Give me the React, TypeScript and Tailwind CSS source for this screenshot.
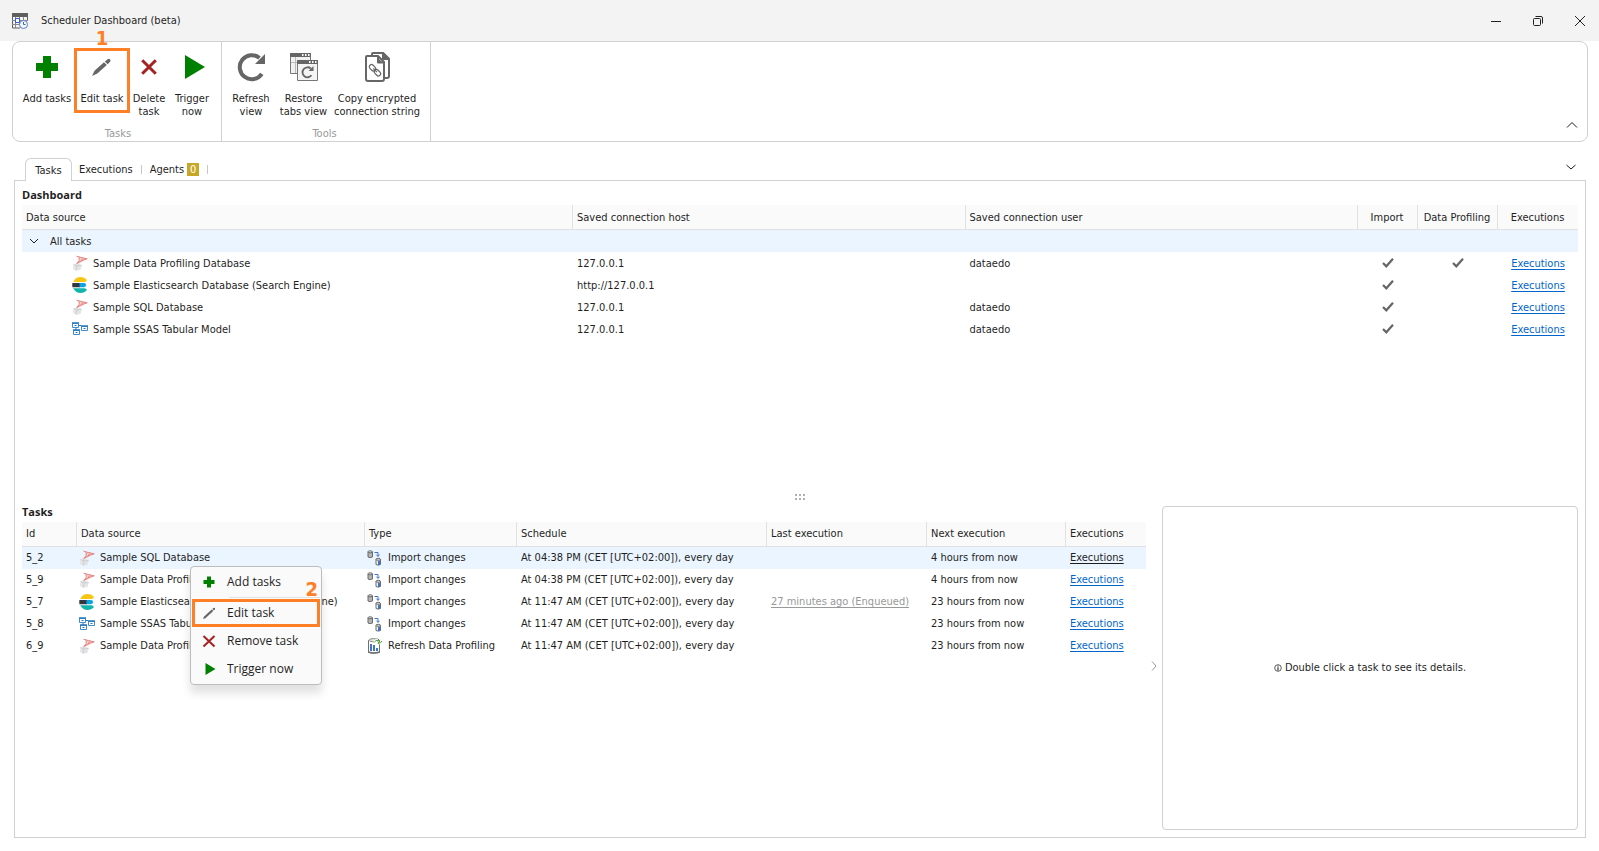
import type { ReactNode } from "react";

type SourceKind = "sqlserver" | "elastic" | "ssas";

type DashboardRow = {
  name: string;
  kind: SourceKind;
  host: string;
  user: string;
  profiling: boolean;
};

type TaskRow = {
  id: string;
  name: string;
  kind: SourceKind;
  type: "import" | "profiling";
  schedule: string;
  last: string;
  next: string;
};

const dashboardRows: DashboardRow[] = [
  {
    name: "Sample Data Profiling Database",
    kind: "sqlserver",
    host: "127.0.0.1",
    user: "dataedo",
    profiling: true,
  },
  {
    name: "Sample Elasticsearch Database (Search Engine)",
    kind: "elastic",
    host: "http://127.0.0.1",
    user: "",
    profiling: false,
  },
  {
    name: "Sample SQL Database",
    kind: "sqlserver",
    host: "127.0.0.1",
    user: "dataedo",
    profiling: false,
  },
  {
    name: "Sample SSAS Tabular Model",
    kind: "ssas",
    host: "127.0.0.1",
    user: "dataedo",
    profiling: false,
  },
];

const afternoon = "At 04:38 PM (CET [UTC+02:00]), every day";
const morning = "At 11:47 AM (CET [UTC+02:00]), every day";

const taskRows: TaskRow[] = [
  {
    id: "5_2",
    name: "Sample SQL Database",
    kind: "sqlserver",
    type: "import",
    schedule: afternoon,
    last: "",
    next: "4 hours from now",
  },
  {
    id: "5_9",
    name: "Sample Data Profiling Database",
    kind: "sqlserver",
    type: "import",
    schedule: afternoon,
    last: "",
    next: "4 hours from now",
  },
  {
    id: "5_7",
    name: "Sample Elasticsearch Database (Search Engine)",
    kind: "elastic",
    type: "import",
    schedule: morning,
    last: "27 minutes ago (Enqueued)",
    next: "23 hours from now",
  },
  {
    id: "5_8",
    name: "Sample SSAS Tabular Model",
    kind: "ssas",
    type: "import",
    schedule: morning,
    last: "",
    next: "23 hours from now",
  },
  {
    id: "6_9",
    name: "Sample Data Profiling Database",
    kind: "sqlserver",
    type: "profiling",
    schedule: morning,
    last: "",
    next: "23 hours from now",
  },
];

const linkClass = "text-[#0066cc] underline underline-offset-2";
const headCellClass =
  "h-[25px] border-b border-[#e1e1e1] bg-[#fafafa] p-0 pl-1 text-left font-normal";
const dividerClass = "border-r";
const annotationClass =
  'absolute bottom-full font-["DejaVu_Sans_Condensed","DejaVu_Sans",sans-serif] text-[20px] leading-[20px] font-bold text-[#ff7f27]';

function AppIcon() {
  return (
    <svg className="size-4" viewBox="0 0 16 16" fill="none">
      <path d="M0.5 1v14H8M15.5 1v6" stroke="#5f5f5f" />
      <path d="M0 0h16v4H0z" fill="#5f5f5f" />
      <path
        d="M0 7.5h16M0 11.5h8M3.5 4v11M7.5 4v8M11.5 4v3"
        stroke="#8a8a8a"
      />
      <rect x="3.5" y="5.5" width="4" height="4" fill="#fff" stroke="#3b62b8" />
      <circle cx="11.5" cy="11.5" r="4" fill="#f5f8ff" stroke="#5b7cc4" />
      <path d="M11.5 9v2.5h2" stroke="#3b62b8" />
    </svg>
  );
}

function PlusIcon({ className }: { className: string }) {
  return (
    <svg className={className} viewBox="0 0 32 32" fill="#008000">
      <path d="M12 5h8v7h7v8h-7v7h-8v-7H5v-8h7z" />
    </svg>
  );
}

function PencilIcon({ className }: { className: string }) {
  return (
    <svg className={className} viewBox="0 0 32 32" fill="#666">
      <path d="M6 25l2.500-5.200L18 11.200l2.800 2.800L11.300 22.600z" />
      <path d="M18.800 10.500l2.800-2.300q1.400-.9 2.400.1t.1 2.400l-2.500 2.600z" />
    </svg>
  );
}

function SlimPencilIcon() {
  return (
    <svg className="size-4" viewBox="0 0 16 16" fill="#666">
      <path d="M2 14l.9-2.300L10.700 4.500l1.600 1.600L4.400 13.200z" />
      <path d="M11.300 3.900l1.100-1q.9-.5 1.400.1t.1 1.300l-1 1.200z" />
    </svg>
  );
}

function CrossIcon({ className }: { className: string }) {
  return (
    <svg
      className={className}
      viewBox="0 0 16 16"
      fill="none"
      stroke="#a52222"
      strokeWidth="3"
    >
      <path d="M1.200 1.200l13.600 13.600M14.800 1.200L1.200 14.800" />
    </svg>
  );
}

function SlimCrossIcon() {
  return (
    <svg
      className="size-4"
      viewBox="0 0 16 16"
      fill="none"
      stroke="#a52222"
      strokeWidth="2"
    >
      <path d="M2.500 3l11 10.500M13.500 3l-11 10.500" />
    </svg>
  );
}

function PlayIcon({ className }: { className: string }) {
  return (
    <svg className={className} viewBox="0 0 32 32" fill="#008000">
      <path d="M9 4l20 12L9 28z" />
    </svg>
  );
}

function RefreshIcon() {
  return (
    <svg className="size-8" viewBox="0 0 32 32" fill="none">
      <path
        d="M26.800 22.800A12 12 0 1 1 24.500 7"
        stroke="#666"
        strokeWidth="4"
      />
      <path d="M30 3v10H20z" fill="#666" />
    </svg>
  );
}

function RestoreTabsIcon() {
  return (
    <svg className="size-8" viewBox="0 0 32 32" fill="none">
      <path d="M2.500 2.500h20v20h-20z" fill="#f1f1f1" stroke="#777" />
      <path d="M2 2h21v4H2z" fill="#666" />
      <path d="M14 4h1.500M17 4h1.500M20 4h1.500" stroke="#fff" strokeWidth="2" />
      <path d="M7.500 6v16M3 11.500h6" stroke="#bbb" />
      <path d="M9.500 9.500h20v20h-20z" fill="#f4f4f4" stroke="#777" />
      <path d="M9 9h21v4H9z" fill="#666" />
      <path d="M21 11h1.500M24 11h1.500M27 11h1.500" stroke="#fff" strokeWidth="2" />
      <path
        d="M23.500 24.300A5 5 0 1 1 22.800 17.500"
        stroke="#666"
        strokeWidth="1.800"
      />
      <path d="M25.500 15v5h-5z" fill="#666" />
    </svg>
  );
}

function CopyStringIcon() {
  return (
    <svg
      className="size-8"
      viewBox="0 0 32 32"
      fill="none"
      stroke="#666"
      strokeWidth="2"
      strokeLinejoin="round"
    >
      <path d="M11 5V3q0-1 1-1h10l6 6v17q0 2-2 2h-2" />
      <path d="M22 2v6h6z" fill="#666" />
      <path d="M6 5h11l6 6v17q0 2-2 2H7q-2 0-2-2V6q0-1 1-1z" fill="#fff" />
      <path d="M17 5.500v6h6" />
      <path d="M17 7v5h5z" fill="#666" stroke="none" />
      <g strokeWidth="1.200">
        <rect
          x="8"
          y="14.500"
          width="7"
          height="4.500"
          rx="2.200"
          transform="rotate(45 11.500 16.700)"
        />
        <rect
          x="13"
          y="19.500"
          width="7"
          height="4.500"
          rx="2.200"
          transform="rotate(45 16.500 21.700)"
        />
        <path d="M12.200 17.300l3.800 3.800" />
      </g>
    </svg>
  );
}

function SourceIcon({ kind }: { kind: SourceKind }) {
  if (kind === "elastic") {
    return (
      <svg className="size-4 shrink-0" viewBox="0 0 16 16">
        <path d="M1.200 5Q3.500 0 8.500 0q4 0 6.500 3.200Q14 5 12.500 5z" fill="#f7c613" />
        <path d="M.4 6H8v4.200H.4Q0 8 .4 6z" fill="#343741" />
        <path d="M7.500 6H12a2.100 2.100 0 0 1 0 4.200H7.500z" fill="#0ba4e0" />
        <path d="M1.200 11.200h11.300q1.500 0 2.500 1.800-2.500 3-6.500 3-5 0-7.300-4.800z" fill="#12b5ab" />
      </svg>
    );
  }

  if (kind === "ssas") {
    return (
      <svg className="size-4 shrink-0" viewBox="0 0 16 16" fill="none">
        <path
          d="M0.500 2.500h6v4h-6zM9.500 5.500h6v4h-6zM1.500 9.500h6v4h-6z"
          fill="#fff"
          stroke="#3d8ccf"
        />
        <path d="M0 2h7M9 5h7M1 9h7" stroke="#2877bd" strokeWidth="1.500" />
        <path d="M4 7v2M7 4.500h2M2.500 4.500h2M11.500 7.500h2M3.500 11.500h2" stroke="#2877bd" />
      </svg>
    );
  }

  return (
    <svg className="size-4 shrink-0" viewBox="0 0 16 16" fill="none">
      <path d="M1.500 9.500l4-1.200 4.500 2-1.500 4.700-4 .8L1 14z" fill="#e4e5e7" />
      <path d="M1.500 9.500l3.500 1.500 4.500-.7M5 11l-1 4.500" stroke="#cccdd0" />
      <path d="M4.500 1q3 1.500 3 3.500 0 2-3.500 4.500l4-1 7.500-4.200Q10 2 4.500 1z" fill="#f6d0ce" />
      <path
        d="M4.500 1.200q4 1.300 10.700 2.600Q9 5 4.500 8.800M7 2.500q1.500 2.500-2 6M10.500 3.500l-1.500 3"
        stroke="#e07a76"
        strokeWidth=".9"
      />
    </svg>
  );
}

function ImportIcon() {
  return (
    <svg className="size-4 shrink-0" viewBox="0 0 16 16" fill="none">
      <path d="M1 2v5q2 1.200 4.500 0V2z" fill="#b5b5b5" stroke="#6a6a6a" />
      <ellipse cx="3.200" cy="1.800" rx="2.300" ry="1" fill="#ddd" stroke="#6a6a6a" />
      <path d="M7.500 2.500H11V6M9.500 4.700L11 6.500l1.500-1.800" stroke="#3f74c6" />
      <path d="M9 9.500v5q2 1.200 4.500 0v-5z" fill="#f5f5f5" stroke="#6a6a6a" />
      <ellipse cx="11.200" cy="9.300" rx="2.300" ry="1" fill="#ddd" stroke="#6a6a6a" />
      <path d="M12 11v4" stroke="#3f74c6" strokeWidth="2" />
    </svg>
  );
}

function ProfilingIcon() {
  return (
    <svg className="size-4 shrink-0" viewBox="0 0 16 16" fill="none">
      <path d="M1.500 2.500v12q4 1.300 11 0v-12z" fill="#fff" stroke="#707070" />
      <path d="M1.500 14q5 1.800 11 0" stroke="#707070" strokeWidth="1.500" />
      <ellipse cx="6.500" cy="2.200" rx="4.500" ry="1.600" fill="#e3e3e3" stroke="#8a8a8a" />
      <path d="M4 6v7M7 7v6M10 10v3" stroke="#3f74c6" strokeWidth="2" />
      <path d="M7.500 4q1-2 4-1.500M15 4q-1 2-4 1.500" stroke="#fff" strokeWidth="3" />
      <path
        d="M7.500 4q1-2 4.500-1.800M10.500.5l1.700 1.700-1.700 1.600M15 3q-.5 2.200-4 2.200M12.500 3.800L11 5.200l1.500 1.500"
        stroke="#3f9a2f"
      />
    </svg>
  );
}

function CheckIcon({ label }: { label: string }) {
  return (
    <svg
      className="mx-auto size-3"
      viewBox="0 0 12 12"
      role="img"
      aria-label={label}
    >
      <path d="M1 6l3.300 3.300L11 1.700" fill="none" stroke="#666" strokeWidth="2.200" />
    </svg>
  );
}

function Chevron({ d, className }: { d: string; className: string }) {
  return (
    <svg
      className={className}
      viewBox="0 0 12 12"
      fill="none"
      stroke="currentColor"
    >
      <path d={d} />
    </svg>
  );
}

function RibbonButton({
  icon,
  label,
  className,
  children,
}: {
  icon: ReactNode;
  label: string;
  className: string;
  children?: ReactNode;
}) {
  return (
    <button
      type="button"
      className={`relative flex flex-col items-center pt-[3px] ${className}`}
    >
      {icon}
      <span className="mt-[9px] leading-[13px] whitespace-pre">{label}</span>
      {children}
    </button>
  );
}

function RibbonGroup({
  title,
  className,
  children,
}: {
  title: string;
  className: string;
  children: ReactNode;
}) {
  return (
    <section
      className={`flex flex-col justify-between border-r border-[#d0d0d0] pt-[6px] ${className}`}
    >
      <div className="flex items-start">{children}</div>
      <h2 className="text-center leading-[15px] text-[#999]">{title}</h2>
    </section>
  );
}

function TitleBar() {
  return (
    <header className="flex h-[41px] shrink-0 items-center bg-[#f3f3f3] pr-[9px] pl-3">
      <AppIcon />
      <h1 className="ml-[13px] flex-1">Scheduler Dashboard (beta)</h1>
      <div className="flex gap-[22px]">
        <button type="button" aria-label="Minimize" className="flex size-5 items-center justify-center">
          <svg className="size-3" viewBox="0 0 12 12" stroke="#222">
            <path d="M1 6.500h10" />
          </svg>
        </button>
        <button type="button" aria-label="Restore" className="flex size-5 items-center justify-center">
          <svg className="size-3" viewBox="0 0 12 12" fill="none" stroke="#222">
            <rect x="1.500" y="3.500" width="7" height="7" rx="1" />
            <path d="M3.500 1.500H9q1.500 0 1.500 1.500v5.500" />
          </svg>
        </button>
        <button type="button" aria-label="Close" className="flex size-5 items-center justify-center">
          <svg className="size-3" viewBox="0 0 12 12" fill="none" stroke="#222">
            <path d="M1 1l10 10M11 1L1 11" />
          </svg>
        </button>
      </div>
    </header>
  );
}

function Ribbon() {
  return (
    <div className="mr-[11px] ml-3 flex h-[101px] shrink-0 rounded-lg border border-[#d0d0d0]">
      <RibbonGroup title="Tasks" className="pr-[5px] pl-[7px]">
        <RibbonButton
          icon={<PlusIcon className="size-8" />}
          label="Add tasks"
          className="w-[54px]"
        />
        <RibbonButton
          icon={<PencilIcon className="size-8" />}
          label="Edit task"
          className="h-[65px] w-[56px] ring-3 ring-[#ff7f27] ring-inset"
        >
          <span className={`${annotationClass} inset-x-0 text-center`}>1</span>
        </RibbonButton>
        <RibbonButton
          icon={<CrossIcon className="m-2 size-4" />}
          label={"Delete\ntask"}
          className="w-[38px]"
        />
        <RibbonButton
          icon={<PlayIcon className="size-8" />}
          label={"Trigger\nnow"}
          className="w-[48px]"
        />
      </RibbonGroup>
      <RibbonGroup title="Tools" className="pr-[7px] pl-1">
        <RibbonButton
          icon={<RefreshIcon />}
          label={"Refresh\nview"}
          className="w-[50px]"
        />
        <RibbonButton
          icon={<RestoreTabsIcon />}
          label={"Restore\ntabs view"}
          className="w-[55px]"
        />
        <RibbonButton
          icon={<CopyStringIcon />}
          label={"Copy encrypted\nconnection string"}
          className="w-[92px]"
        />
      </RibbonGroup>
      <button type="button" aria-label="Collapse ribbon" className="mt-auto mr-[9px] mb-[10px] ml-auto">
        <Chevron d="M1 8.500L6 3.500L11 8.500" className="size-3" />
      </button>
    </div>
  );
}

function TabStrip() {
  return (
    <nav className="mt-4 mr-3 ml-[14px] flex h-[22px] shrink-0 items-center pl-[11px]">
      <button
        type="button"
        className="relative z-10 -mb-px h-[23px] w-[47px] rounded-t-md border border-b-0 border-[#d0d0d0] bg-white"
      >
        Tasks
      </button>
      <button type="button" className="px-[7px]">
        Executions
      </button>
      <span className="ml-px h-[9px] w-px bg-[#c8c8c8]" />
      <button type="button" className="flex items-center gap-[3px] px-2">
        Agents
        <span className="h-[13px] w-3 bg-[#c9a726] text-center leading-[13px] text-white">
          0
        </span>
      </button>
      <span className="h-[9px] w-px bg-[#c8c8c8]" />
      <button type="button" aria-label="Tab list" className="mr-[10px] mb-1 ml-auto">
        <Chevron d="M1.500 4L6 8L10.500 4" className="size-3" />
      </button>
    </nav>
  );
}

function SectionTitle({ children }: { children: ReactNode }) {
  return (
    <h2 className='h-5 font-["Open_Sans",sans-serif] text-[11px] leading-5 font-bold'>
      {children}
    </h2>
  );
}

function DashboardTable() {
  return (
    <table className="w-full table-fixed border-separate border-spacing-0">
      <colgroup>
        <col className="w-[551px]" />
        <col />
        <col />
        <col className="w-[60px]" />
        <col className="w-[80px]" />
        <col className="w-[80px]" />
      </colgroup>
      <thead>
        <tr>
          <th className={`${headCellClass} ${dividerClass}`}>Data source</th>
          <th className={`${headCellClass} ${dividerClass}`}>
            Saved connection host
          </th>
          <th className={`${headCellClass} ${dividerClass}`}>
            Saved connection user
          </th>
          <th className={`${headCellClass} ${dividerClass}`}>
            <span className="block pr-[5px] text-center">Import</span>
          </th>
          <th className={`${headCellClass} ${dividerClass}`}>
            <span className="block pr-[5px] text-center whitespace-nowrap">
              Data Profiling
            </span>
          </th>
          <th className={headCellClass}>
            <span className="block pr-[5px] text-center">Executions</span>
          </th>
        </tr>
      </thead>
      <tbody>
        <tr className="h-[22px] bg-[#ebf5ff]">
          <td colSpan={6} className="p-0">
            <div className="flex items-center gap-[10px] pl-[6px]">
              <Chevron d="M2 4L6 8L10 4" className="size-3" />
              All tasks
            </div>
          </td>
        </tr>
        {dashboardRows.map((row) => (
          <tr key={row.name} className="h-[22px]">
            <td className="p-0">
              <div className="flex items-center gap-[5px] pl-[50px]">
                <SourceIcon kind={row.kind} />
                {row.name}
              </div>
            </td>
            <td className="p-0 pl-1">{row.host}</td>
            <td className="p-0 pl-1">{row.user}</td>
            <td className="p-0">
              <CheckIcon label="Import" />
            </td>
            <td className="p-0">
              {row.profiling && <CheckIcon label="Data Profiling" />}
            </td>
            <td className="p-0 text-center">
              <a href="#executions" className={linkClass}>
                Executions
              </a>
            </td>
          </tr>
        ))}
      </tbody>
    </table>
  );
}

function TasksTable() {
  return (
    <table className="w-full table-fixed border-separate border-spacing-0 whitespace-nowrap">
      <colgroup>
        <col className="w-[55px]" />
        <col />
        <col className="w-[152px]" />
        <col className="w-[250px]" />
        <col className="w-[160px]" />
        <col className="w-[139px]" />
        <col className="w-[80px]" />
      </colgroup>
      <thead>
        <tr>
          <th className={`${headCellClass} ${dividerClass}`}>Id</th>
          <th className={`${headCellClass} ${dividerClass}`}>Data source</th>
          <th className={`${headCellClass} ${dividerClass}`}>Type</th>
          <th className={`${headCellClass} ${dividerClass}`}>Schedule</th>
          <th className={`${headCellClass} ${dividerClass}`}>Last execution</th>
          <th className={`${headCellClass} ${dividerClass}`}>Next execution</th>
          <th className={headCellClass}>Executions</th>
        </tr>
      </thead>
      <tbody>
        {taskRows.map((row, index) => (
          <tr
            key={row.id}
            className={index === 0 ? "h-[22px] bg-[#ebf5ff]" : "h-[22px]"}
          >
            <td className="p-0 pl-1">{row.id}</td>
            <td className="p-0">
              <div className="flex items-center gap-[5px] pl-[2px]">
                <SourceIcon kind={row.kind} />
                {row.name}
              </div>
            </td>
            <td className="p-0">
              <div className="flex items-center gap-[5px] pl-[2px]">
                {row.type === "import" ? <ImportIcon /> : <ProfilingIcon />}
                {row.type === "import" ? "Import changes" : "Refresh Data Profiling"}
              </div>
            </td>
            <td className="p-0 pl-1">{row.schedule}</td>
            <td className="p-0 pl-1">
              {row.last && (
                <a href="#last" className="text-[#999] underline underline-offset-2">
                  {row.last}
                </a>
              )}
            </td>
            <td className="p-0 pl-1">{row.next}</td>
            <td className="p-0 pl-1">
              <a
                href="#executions"
                className={index === 0 ? "underline underline-offset-2" : linkClass}
              >
                Executions
              </a>
            </td>
          </tr>
        ))}
      </tbody>
    </table>
  );
}

function ContextMenu() {
  const itemClass = "relative flex h-7 w-full items-center gap-[10px] pl-[9px]";

  return (
    <div
      role="menu"
      className='absolute top-16 left-[175px] w-[132px] rounded-[4px] border border-[#bdbdbd] bg-[#fafafa] p-px font-["Open_Sans",sans-serif] text-[12px] shadow-[0_8px_10px_rgba(0,0,0,0.12)]'
    >
      <button type="button" role="menuitem" className={itemClass}>
        <PlusIcon className="size-4" />
        Add tasks
      </button>
      <div className="my-px ml-[37px] h-px bg-[#e1e1e1]" />
      <button
        type="button"
        role="menuitem"
        className={`${itemClass} ring-3 ring-[#ff7f27] ring-inset`}
      >
        <SlimPencilIcon />
        Edit task
        <span className={`${annotationClass} right-[2px]`}>2</span>
      </button>
      <button type="button" role="menuitem" className={itemClass}>
        <SlimCrossIcon />
        Remove task
      </button>
      <button type="button" role="menuitem" className={itemClass}>
        <PlayIcon className="size-4" />
        Trigger now
      </button>
    </div>
  );
}

export default function App() {
  return (
    <div className='flex min-h-screen flex-col bg-white font-["DejaVu_Sans_Condensed","DejaVu_Sans",sans-serif] text-[11px] leading-[15px] text-[#1f1f1f]'>
      <TitleBar />
      <Ribbon />
      <TabStrip />
      <main className="mr-[13px] mb-[13px] ml-[14px] flex flex-1 flex-col border border-[#d0d0d0]">
        <section className="flex-[29_1_0px] px-[7px] pt-1">
          <SectionTitle>Dashboard</SectionTitle>
          <DashboardTable />
        </section>

        <div className="flex h-[10px] shrink-0 items-center justify-center">
          <svg className="h-[6px] w-[10px]" viewBox="0 0 10 6" fill="#b0b0b0">
            <path d="M0 0h2v2H0zM4 0h2v2H4zM8 0h2v2H8zM0 4h2v2H0zM4 4h2v2H4zM8 4h2v2H8z" />
          </svg>
        </div>

        <section className="relative flex flex-[31_1_0px] px-[7px] pb-[7px]">
          <div className="min-w-0 flex-1">
            <SectionTitle>Tasks</SectionTitle>
            <TasksTable />
          </div>
          <button
            type="button"
            aria-label="Hide details"
            className="flex w-4 items-center justify-center text-[#999]"
          >
            <Chevron d="M4 1.500L8 6L4 10.500" className="size-3" />
          </button>
          <aside className="mt-1 flex w-[416px] items-center justify-center gap-[3px] rounded-[4px] border border-[#d0d0d0]">
            <svg className="size-2" viewBox="0 0 8 8" fill="none" stroke="#333">
              <circle cx="4" cy="4" r="3.300" strokeWidth=".8" />
              <path d="M4 1.500v1M4 3.200v3.200" strokeWidth="1.200" />
            </svg>
            Double click a task to see its details.
          </aside>
          <ContextMenu />
        </section>
      </main>
    </div>
  );
}
